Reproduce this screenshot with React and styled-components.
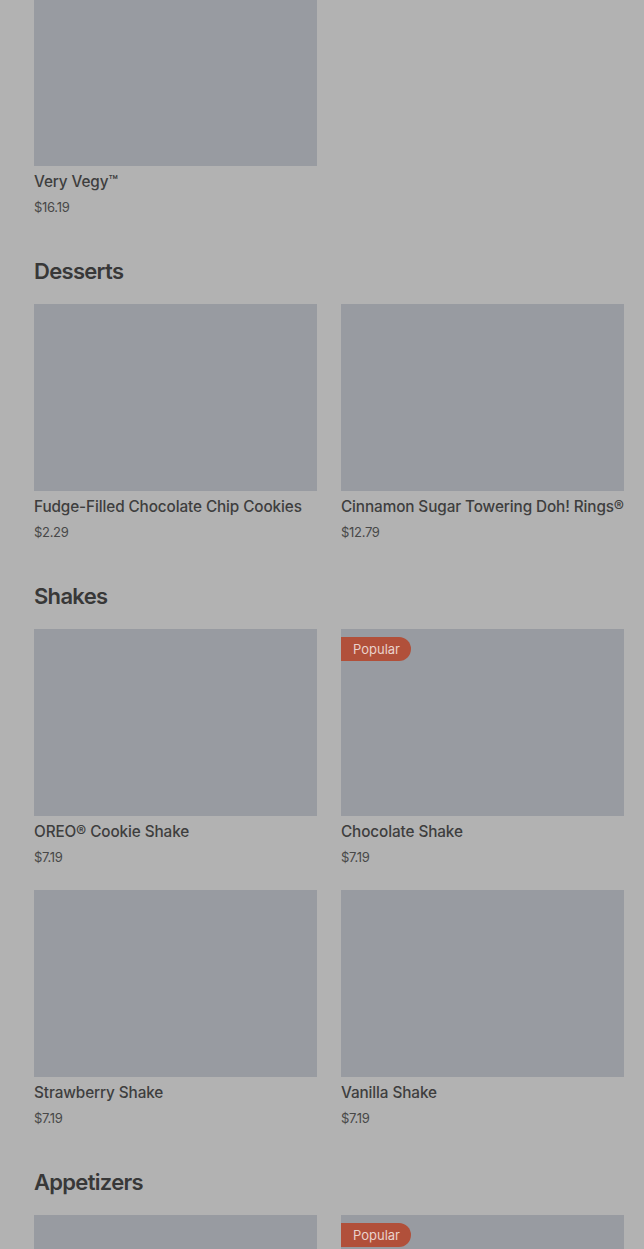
import styled, { createGlobalStyle } from 'styled-components'

const GlobalStyle = createGlobalStyle`
  html, body {
    margin: 0;
    padding: 0;
    background: #b2b2b2;
    overflow: hidden;
  }
  body {
    font-family: Inter, "Liberation Sans", sans-serif;
    color: #3c3c3c;
  }
`

const Page = styled.main`
  padding: 0 20px 0 34px;
  margin-top: -21px;
  height: 1270px;
  overflow: hidden;
`

const Section = styled.section`
  & + & {
    margin-top: 39px;
  }
`

const Heading = styled.h2`
  margin: 0 0 17px;
  font-size: 22px;
  line-height: 32px;
  font-weight: 600;
  letter-spacing: -0.7px;
  color: #383838;
`

const Grid = styled.div`
  display: grid;
  grid-template-columns: repeat(2, minmax(0, 1fr));
  column-gap: 24px;
  row-gap: 24px;
`

const Card = styled.div`
  display: flex;
  flex-direction: column;
`

const Thumb = styled.div`
  position: relative;
  height: 187px;
  background: #989ba1;
`

const Badge = styled.span`
  position: absolute;
  top: 8px;
  left: 0;
  height: 24px;
  padding: 0 11px 0 12px;
  display: flex;
  align-items: center;
  background: #b1503a;
  color: #ead2cb;
  font-size: 13px;
  border-radius: 0 12px 12px 0;
`

const Title = styled.div`
  margin-top: 6px;
  font-size: 15.3px;
  line-height: 20px;
  font-weight: 500;
  letter-spacing: -0.1px;
  color: #3e3e3e;
  white-space: nowrap;
`

const Price = styled.div`
  margin-top: 6px;
  font-size: 13px;
  line-height: 18px;
  color: #484848;
  letter-spacing: -0.3px;
`

const menu = [
  {
    name: null,
    items: [{ id: 'vegy', title: 'Very Vegy™', price: '$16.19' }],
  },
  {
    name: 'Desserts',
    items: [
      { id: 'cookies', title: 'Fudge-Filled Chocolate Chip Cookies', price: '$2.29' },
      { id: 'rings', title: 'Cinnamon Sugar Towering Doh! Rings®', price: '$12.79' },
    ],
  },
  {
    name: 'Shakes',
    items: [
      { id: 'oreo', title: 'OREO® Cookie Shake', price: '$7.19' },
      { id: 'choc', title: 'Chocolate Shake', price: '$7.19', popular: true },
      { id: 'straw', title: 'Strawberry Shake', price: '$7.19' },
      { id: 'vanilla', title: 'Vanilla Shake', price: '$7.19' },
    ],
  },
  {
    name: 'Appetizers',
    items: [{ id: 'app1' }, { id: 'app2', popular: true }],
  },
]

const App = () => (
  <>
    <GlobalStyle />
    <Page>
      {menu.map((section, i) => (
        <Section key={i}>
          {section.name && <Heading>{section.name}</Heading>}
          <Grid>
            {section.items.map((item) => (
              <Card key={item.id}>
                <Thumb>{item.popular && <Badge>Popular</Badge>}</Thumb>
                {item.title && <Title>{item.title}</Title>}
                {item.price && <Price>{item.price}</Price>}
              </Card>
            ))}
          </Grid>
        </Section>
      ))}
    </Page>
  </>
)

export default App
